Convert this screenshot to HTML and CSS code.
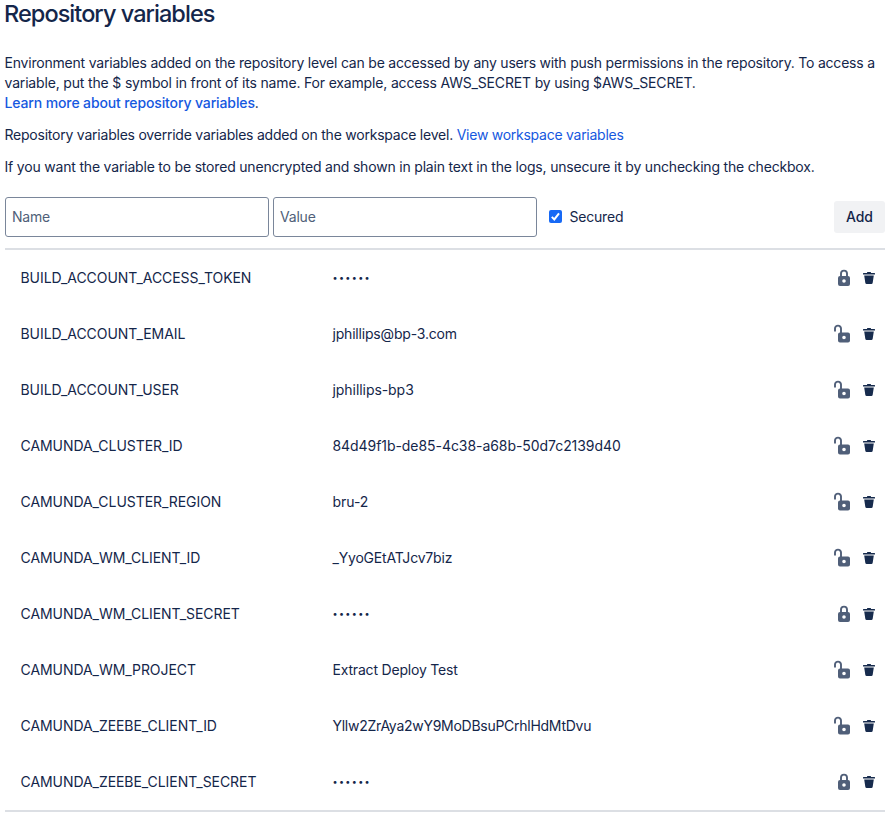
FILE: index.html
```html
<!DOCTYPE html>
<html lang="en">
<head>
<meta charset="utf-8">
<title>Repository variables</title>
<link rel="stylesheet" href="styles.css">
</head>
<body>
<svg class="sprite" aria-hidden="true">
  <symbol id="locked" viewBox="0 0 20 20">
    <path d="M7 9V5.600a3 3 0 0 1 6 0V9" fill="none" stroke="currentColor" stroke-width="1.900"/>
    <path fill="currentColor" fill-rule="evenodd" d="M6 8h8a2 2 0 0 1 2 2v6a2 2 0 0 1-2 2H6a2 2 0 0 1-2-2v-6a2 2 0 0 1 2-2zm4 3.200a1.800 1.800 0 1 0 0 3.600a1.800 1.800 0 0 0 0-3.600z"/>
  </symbol>
  <symbol id="unlocked" viewBox="0 0 20 20">
    <path d="M1 7.500V4.600a3 3 0 0 1 6 0V9" fill="none" stroke="currentColor" stroke-width="1.900"/>
    <path fill="currentColor" fill-rule="evenodd" d="M6 8.500h8a2 2 0 0 1 2 2v6a2 2 0 0 1-2 2H6a2 2 0 0 1-2-2v-6a2 2 0 0 1 2-2zm4 3.200a1.800 1.800 0 1 0 0 3.600a1.800 1.800 0 0 0 0-3.600z"/>
  </symbol>
  <symbol id="trash" viewBox="0 0 12 14">
    <path fill="currentColor" d="M4 1.600a.6.6 0 0 1 .6-.6h2.800a.6.6 0 0 1 .6.600V2h3.500a.5.5 0 0 1 .5.500v1H0v-1a.5.5 0 0 1 .5-.5H4zM1.200 4.500h9.600l-1.100 7.300a1.400 1.400 0 0 1-1.400 1.200H3.700a1.400 1.400 0 0 1-1.400-1.200z"/>
  </symbol>
</svg>
<main class="page">
  <h1 class="title">Repository variables</h1>
  <div class="intro">
    <p><span class="lead">Environment variables added on the repository level can be accessed by any users with push permissions in the repository. To access a</span><br><span class="example">variable, put the $ symbol in front of its name. For example, access AWS_SECRET by using $AWS_SECRET.</span><br><a class="strong" href="#">Learn more about repository variables</a>.</p>
    <p class="override">Repository variables override variables added on the workspace level. <a href="#">View workspace variables</a></p>
    <p>If you want the variable to be stored unencrypted and shown in plain text in the logs, unsecure it by unchecking the checkbox.</p>
  </div>
  <form class="add-form">
    <input class="field" type="text" placeholder="Name">
    <input class="field" type="text" placeholder="Value">
    <label class="secured"><span class="check"><svg viewBox="0 0 13 13"><path d="M2.800 6.900L5.300 9.400L10 3.300" fill="none" stroke="#fff" stroke-width="2"/></svg></span>Secured</label>
    <button class="add" type="button">Add</button>
  </form>
  <ul class="variables">
    <li><span class="name">BUILD_ACCOUNT_ACCESS_TOKEN</span><span class="dots">••••••</span><svg class="lock"><use href="#locked"/></svg><svg class="trash"><use href="#trash"/></svg></li>
    <li><span class="name">BUILD_ACCOUNT_EMAIL</span><span>jphillips@bp-3.com</span><svg class="lock"><use href="#unlocked"/></svg><svg class="trash"><use href="#trash"/></svg></li>
    <li><span class="name">BUILD_ACCOUNT_USER</span><span class="code">jphillips-bp3</span><svg class="lock"><use href="#unlocked"/></svg><svg class="trash"><use href="#trash"/></svg></li>
    <li><span class="name">CAMUNDA_CLUSTER_ID</span><span class="code">84d49f1b-de85-4c38-a68b-50d7c2139d40</span><svg class="lock"><use href="#unlocked"/></svg><svg class="trash"><use href="#trash"/></svg></li>
    <li><span class="name">CAMUNDA_CLUSTER_REGION</span><span class="code">bru-2</span><svg class="lock"><use href="#unlocked"/></svg><svg class="trash"><use href="#trash"/></svg></li>
    <li><span class="name">CAMUNDA_WM_CLIENT_ID</span><span>_YyoGEtATJcv7biz</span><svg class="lock"><use href="#unlocked"/></svg><svg class="trash"><use href="#trash"/></svg></li>
    <li><span class="name">CAMUNDA_WM_CLIENT_SECRET</span><span class="dots">••••••</span><svg class="lock"><use href="#locked"/></svg><svg class="trash"><use href="#trash"/></svg></li>
    <li><span class="name">CAMUNDA_WM_PROJECT</span><span>Extract Deploy Test</span><svg class="lock"><use href="#unlocked"/></svg><svg class="trash"><use href="#trash"/></svg></li>
    <li><span class="name">CAMUNDA_ZEEBE_CLIENT_ID</span><span class="token">Yllw2ZrAya2wY9MoDBsuPCrhlHdMtDvu</span><svg class="lock"><use href="#unlocked"/></svg><svg class="trash"><use href="#trash"/></svg></li>
    <li><span class="name">CAMUNDA_ZEEBE_CLIENT_SECRET</span><span class="dots">••••••</span><svg class="lock"><use href="#locked"/></svg><svg class="trash"><use href="#trash"/></svg></li>
  </ul>
</main>
</body>
</html>
```
FILE: styles.css
```css
* { box-sizing: border-box; }
body {
  margin: 0;
  background: #fff;
  color: #14264a;
  font: 14px/20px Inter, "Liberation Sans", sans-serif;
  letter-spacing: -0.19px;
}
.sprite { display: none; }
.page { width: 880px; margin-left: 5px; }
.title {
  margin: 0 0 0 -1px;
  font-size: 23.5px;
  line-height: 28px;
  font-weight: 540;
  letter-spacing: -0.95px;
}
.intro {
  margin-left: -0.5px;
  padding-top: 25px;
  white-space: nowrap;
}
.intro p { margin: 0 0 12px; }
.intro p:last-child { margin-bottom: 10px; }
.lead { letter-spacing: -0.207px; }
.example { letter-spacing: -0.168px; }
.override { letter-spacing: -0.225px; }
.override a { letter-spacing: -0.26px; }
a { color: #1558e0; text-decoration: none; }
.strong { font-weight: 550; letter-spacing: -0.125px; }
.add-form {
  display: flex;
  align-items: center;
  height: 61px;
  padding-bottom: 1px;
}
.field {
  width: 264px;
  height: 40px;
  margin: 0 4px 0 0;
  padding: 0 6px 1px;
  border: 1px solid #7a869a;
  border-radius: 3px;
  background: #fff;
  color: inherit;
  font: inherit;
  letter-spacing: -0.2px;
}
.field::placeholder { color: #505f79; opacity: 1; }
.secured {
  display: flex;
  align-items: center;
  gap: 7.5px;
  margin-left: 8px;
  letter-spacing: -0.2px;
}
.check {
  width: 13px;
  height: 13px;
  margin-top: -1px;
  border-radius: 2px;
  background: #1769f5;
}
.check svg { display: block; width: 13px; height: 13px; }
.add {
  width: 51px;
  height: 32px;
  margin-left: auto;
  padding: 0;
  border: 0;
  border-radius: 3px;
  background: #f1f2f4;
  color: inherit;
  font: inherit;
  font-weight: 500;
  letter-spacing: -0.1px;
}
.variables {
  margin: 0;
  padding: 0;
  list-style: none;
  border-top: 2px solid #dcdfe4;
  border-bottom: 2px solid #dcdfe4;
}
.variables li {
  display: grid;
  grid-template-columns: 312px 1fr 20px 12px;
  align-items: center;
  height: 56px;
  padding: 0 10px 0 15.5px;
}
.name, .code { letter-spacing: -0.06px; }
.token { letter-spacing: -0.27px; }
.dots { font-size: 9px; letter-spacing: 1.35px; }
.variables .lock { width: 20px; height: 20px; margin-left: -9px; color: #505f79; }
.variables .trash { width: 12px; height: 14px; color: #172b4d; }
```
